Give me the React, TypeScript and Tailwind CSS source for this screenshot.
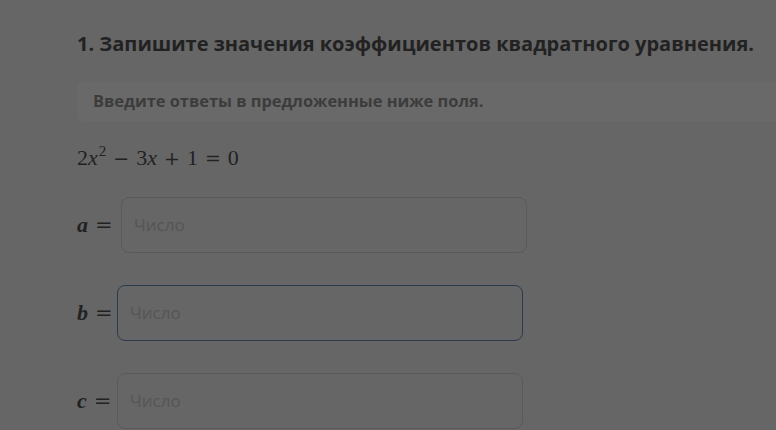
import React from "react";

const sans = { fontFamily: '"Open Sans", "Noto Sans", sans-serif' };
const serif = { fontFamily: '"Liberation Serif", "DejaVu Serif", serif' };
const ops = { fontFamily: '"DejaVu Serif", "Liberation Serif", serif' };

function Var({ children }: { children: React.ReactNode }) {
  return <span className="italic">{children}</span>;
}

function Op({ children }: { children: React.ReactNode }) {
  return (
    <span className="mx-[7px] text-[19px] font-light" style={ops}>
      {children}
    </span>
  );
}

function Field({ name, focused, shift }: { name: string; focused?: boolean; shift?: boolean }) {
  return (
    <div className="flex items-center">
      <div className="w-[40px] shrink-0 flex items-baseline text-[22px] text-[#222]" style={serif}>
        <span className="font-bold italic">{name}</span>
        <span className="ml-[7px] text-[21px]" style={ops}>=</span>
      </div>
      <div
        className={
          "h-[56px] w-[406px] rounded-[8px] border flex items-center px-[12px] text-[17px] text-[#555555] " +
          (focused ? "border-[#2c3a4e] border-[1.5px]" : "border-[#5a5a5a]") +
          (shift ? " ml-[4px]" : "")
        }
        style={sans}
      >
        Число
      </div>
    </div>
  );
}

export default function App() {
  return (
    <div className="w-[776px] h-[430px] overflow-hidden bg-[#666666]">
      <div className="pl-[77px] pt-[27px]">
        <h1 className="text-[20px] font-bold text-[#222] leading-[34px]" style={sans}>
          1. Запишите значения коэффициентов квадратного уравнения.
        </h1>
        <div className="mt-[21px] h-[39px] bg-[#696969] rounded-l-[6px] flex items-center pl-[16px]">
          <span className="text-[16.4px] font-bold text-[#3c3c3c]" style={sans}>
            Введите ответы в предложенные ниже поля.
          </span>
        </div>
        <div className="mt-[22px] flex items-baseline text-[22px] text-[#222] leading-[30px]" style={serif}>
          <span>2</span>
          <Var>x</Var>
          <span className="text-[15px] relative top-[-9px] ml-[1px]">2</span>
          <Op>−</Op>
          <span>3</span>
          <Var>x</Var>
          <Op>+</Op>
          <span>1</span>
          <Op>=</Op>
          <span>0</span>
        </div>
        <div className="mt-[22px] flex flex-col gap-[32px]">
          <Field name="a" shift />
          <Field name="b" focused />
          <Field name="c" />
        </div>
      </div>
    </div>
  );
}
